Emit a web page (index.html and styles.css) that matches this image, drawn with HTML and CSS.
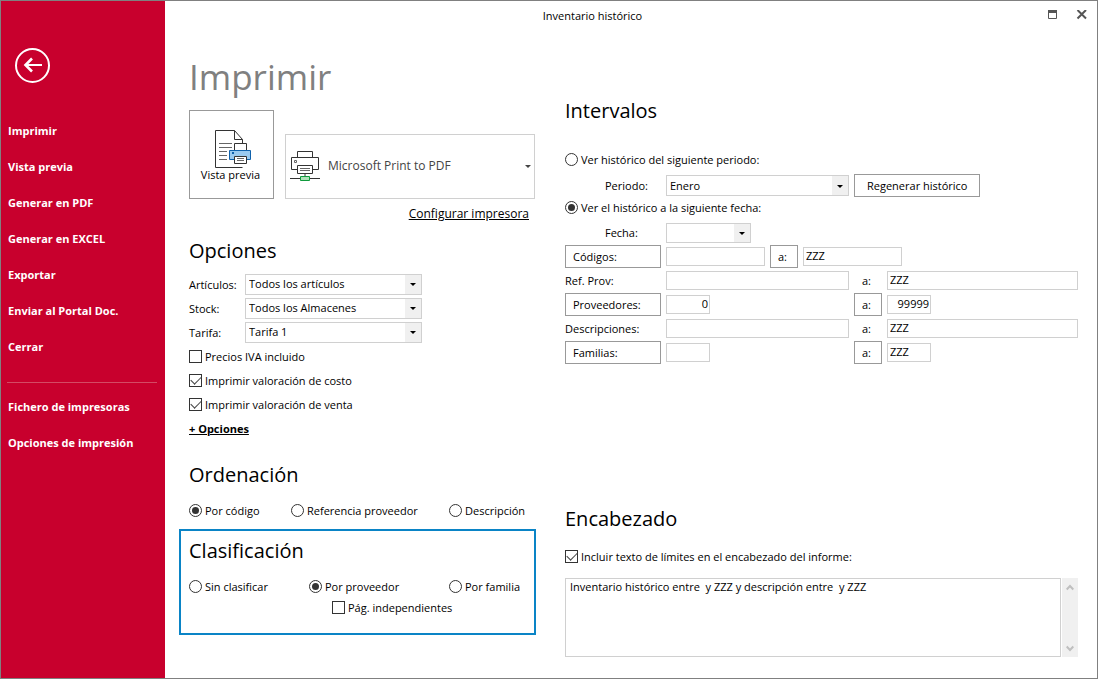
FILE: index.html
```html
<!DOCTYPE html>
<html lang="es">
<head>
<meta charset="utf-8">
<title>Inventario histórico</title>
<link rel="stylesheet" href="styles.css">
</head>
<body>
<div class="window">
  <aside class="sidebar">
    <button class="back" type="button" aria-label="Volver">
      <svg width="36" height="36" viewBox="0 0 36 36" fill="none" stroke="#fff">
        <circle cx="17.5" cy="17.5" r="16.5" stroke-width="2"/>
        <path d="M10 17H27" stroke-width="2"/>
        <path d="M17 10.5L10.500 17L17 23.500" stroke-width="2.6"/>
      </svg>
    </button>
    <nav class="menu">
      <a href="#">Imprimir</a>
      <a href="#">Vista previa</a>
      <a href="#">Generar en PDF</a>
      <a href="#">Generar en EXCEL</a>
      <a href="#">Exportar</a>
      <a href="#">Enviar al Portal Doc.</a>
      <a href="#">Cerrar</a>
      <hr>
      <a href="#">Fichero de impresoras</a>
      <a href="#">Opciones de impresión</a>
    </nav>
  </aside>
  <main class="main">
    <header class="titlebar">
      <span class="caption">Inventario histórico</span>
      <button type="button" aria-label="Maximizar">
        <svg width="12" height="12" viewBox="0 0 12 12"><path d="M1.5 .5h8v8h-8z" fill="none" stroke="#555"/><path d="M1 0h9v3H1z" fill="#555"/></svg>
      </button>
      <button type="button" aria-label="Cerrar ventana">
        <svg width="12" height="12" viewBox="0 0 12 12"><path d="M1.5 0l8.500 8.500M10 0l-8.500 8.500" stroke="#555" stroke-width="2"/></svg>
      </button>
    </header>
    <form class="columns">
      <div class="left">
        <h1>Imprimir</h1>
        <div class="printer">
          <button class="preview" type="button">
            <svg width="38" height="40" viewBox="0 0 38 40" fill="none">
              <path d="M28.500 37.500H1.500V.5H20.500L28.500 9.500V14" stroke="#333"/>
              <path d="M20.500.5V9.500H28.500" stroke="#333"/>
              <path d="M5 13.500H18M5 17.500H18M5 21.500H13M5 25.500H13M5 29.500H13" stroke="#666"/>
              <path d="M20.500 20V13.500H32.500V20" fill="#fff" stroke="#333"/>
              <path d="M15.500 20.500H36.500V29.500H15.500z" fill="#99caf0" stroke="#0f62ac"/>
              <path d="M18 22h2v2h-2z" fill="#0f62ac"/>
              <path d="M20.500 26.500H32.500V33.500H20.500z" fill="#fff" stroke="#333"/>
              <path d="M23 28.500H30M23 30.500H30" stroke="#666"/>
            </svg>
            <span>Vista previa</span>
          </button>
          <div class="combo device">
            <svg class="device-icon" width="30" height="32" viewBox="0 0 30 32" fill="none">
              <path d="M7.500 7V1.500H22.500V7" stroke="#333"/>
              <path d="M7 19.500H1.500V7.500H28.500V19.500H23" stroke="#333"/>
              <path d="M4.500 10.500h2v2h-2z" stroke="#666"/>
              <path d="M7.500 15.500H22.500V23.500H7.500z" fill="#fff" stroke="#333"/>
              <path d="M10 18.500H20M10 20.500H20" stroke="#666"/>
              <path d="M15 24v2" stroke="#999" stroke-width="2"/>
              <path d="M0 28.500H30" stroke="#333"/>
              <path d="M10.500 26.500h9v4h-9z" fill="#aee0b8" stroke="#0f9a3c"/>
            </svg>
            <select aria-label="Impresora"><option>Microsoft Print to PDF</option></select>
          </div>
        </div>
        <a class="configure" href="#">Configurar impresora</a>

        <section class="options">
          <h2>Opciones</h2>
          <div class="option"><label for="articulos">Artículos:</label><div class="combo"><select id="articulos"><option>Todos los artículos</option></select></div></div>
          <div class="option"><label for="stock">Stock:</label><div class="combo"><select id="stock"><option>Todos los Almacenes</option></select></div></div>
          <div class="option"><label for="tarifa">Tarifa:</label><div class="combo"><select id="tarifa"><option>Tarifa 1</option></select></div></div>
          <label class="choice"><input type="checkbox">Precios IVA incluido</label>
          <label class="choice"><input type="checkbox" checked>Imprimir valoración de costo</label>
          <label class="choice"><input type="checkbox" checked>Imprimir valoración de venta</label>
          <a class="more" href="#">+ Opciones</a>
        </section>

        <section class="sorting">
          <h2>Ordenación</h2>
          <div class="choices order">
            <label class="choice"><input type="radio" name="orden" checked>Por código</label>
            <label class="choice"><input type="radio" name="orden">Referencia proveedor</label>
            <label class="choice"><input type="radio" name="orden">Descripción</label>
          </div>
        </section>

        <section class="grouping">
          <h2>Clasificación</h2>
          <div class="choices group">
            <label class="choice"><input type="radio" name="clase">Sin clasificar</label>
            <label class="choice"><input type="radio" name="clase" checked>Por proveedor</label>
            <label class="choice"><input type="radio" name="clase">Por familia</label>
            <label class="choice nested"><input type="checkbox">Pág. independientes</label>
          </div>
        </section>
      </div>

      <div class="right">
        <section class="ranges">
          <h2>Intervalos</h2>
          <label class="choice"><input type="radio" name="modo">Ver histórico del siguiente periodo:</label>
          <div class="range">
            <label class="name inner" for="periodo">Periodo:</label>
            <div class="combo span"><select id="periodo"><option>Enero</option></select></div>
            <button class="push" type="button">Regenerar histórico</button>
          </div>
          <label class="choice"><input type="radio" name="modo" checked>Ver el histórico a la siguiente fecha:</label>
          <div class="range">
            <label class="name inner" for="fecha">Fecha:</label>
            <div class="combo date"><select id="fecha"><option></option></select></div>
          </div>
          <div class="range">
            <button class="push name" type="button">Códigos:</button>
            <input class="medium" type="text" aria-label="Código desde">
            <button class="push to" type="button">a:</button>
            <input class="medium" type="text" aria-label="Código hasta" value="ZZZ">
          </div>
          <div class="range">
            <label class="name" for="ref">Ref. Prov:</label>
            <input class="span" id="ref" type="text">
            <label class="to" for="ref-to">a:</label>
            <input class="fill" id="ref-to" type="text" value="ZZZ">
          </div>
          <div class="range">
            <button class="push name" type="button">Proveedores:</button>
            <div class="span"><input class="short number" type="text" aria-label="Proveedor desde" value="0"></div>
            <button class="push to" type="button">a:</button>
            <input class="short number" type="text" aria-label="Proveedor hasta" value="99999">
          </div>
          <div class="range">
            <label class="name" for="desc">Descripciones:</label>
            <input class="span" id="desc" type="text">
            <label class="to" for="desc-to">a:</label>
            <input class="fill" id="desc-to" type="text" value="ZZZ">
          </div>
          <div class="range">
            <button class="push name" type="button">Familias:</button>
            <div class="span"><input class="short" type="text" aria-label="Familia desde"></div>
            <button class="push to" type="button">a:</button>
            <input class="short" type="text" aria-label="Familia hasta" value="ZZZ">
          </div>
        </section>

        <section class="heading">
          <h2>Encabezado</h2>
          <label class="choice"><input type="checkbox" checked>Incluir texto de límites en el encabezado del informe:</label>
          <div class="note">
            <textarea aria-label="Texto del encabezado">Inventario histórico entre  y ZZZ y descripción entre  y ZZZ</textarea>
            <div class="scroll">
              <button type="button" aria-label="Subir"><svg width="8" height="7" viewBox="0 0 8 7"><path d="M.7 5.500L4 2L7.300 5.500" fill="none" stroke="#bfbfbf" stroke-width="2"/></svg></button>
              <button type="button" aria-label="Bajar"><svg width="8" height="7" viewBox="0 0 8 7"><path d="M.7 1.500L4 5L7.300 1.500" fill="none" stroke="#bfbfbf" stroke-width="2"/></svg></button>
            </div>
          </div>
        </section>
      </div>
    </form>
  </main>
</div>
</body>
</html>
```
FILE: styles.css
```css
* { box-sizing: border-box; }

body {
  margin: 0;
  background: #fff;
  color: #000;
  font: 11px/16px "Open Sans", "Noto Sans", sans-serif;
}

button, input, select, textarea {
  margin: 0;
  color: inherit;
  font: inherit;
}

button { padding: 0; border: 0; background: none; }

a { color: inherit; }

h1, h2 { margin: 0; font-weight: 400; }

h1 {
  color: #808080;
  font-size: 35px;
  line-height: 48px;
}

h2 { font-size: 20px; line-height: 28px; }

.window {
  display: flex;
  min-height: 100vh;
  border: 1px solid #808080;
}

/* Sidebar */
.sidebar {
  flex: 0 0 164px;
  padding: 47px 8px 0 6px;
  background: #c8002d;
  color: #fff;
}

.back { display: block; margin-left: 8px; height: 36px; }
.back svg { display: block; }

.menu { display: flex; flex-direction: column; margin-top: 29px; }

.menu a {
  padding-left: 1px;
  line-height: 36px;
  font-weight: 700;
  text-decoration: none;
  white-space: nowrap;
}

.menu hr {
  width: 100%;
  height: 1px;
  margin: 17px 0 6px;
  border: 0;
  background: #d44a64;
}

/* Main area */
.main { flex: 1; min-width: 0; }

.titlebar {
  display: flex;
  align-items: center;
  gap: 17px;
  height: 30px;
  padding-right: 9px;
}

.titlebar .caption { flex: 1; padding-right: 10px; text-align: center; }
.titlebar button { height: 20px; }
.titlebar svg { display: block; }

.columns {
  display: grid;
  grid-template-columns: minmax(0, 346fr) minmax(0, 513fr);
  gap: 30px;
  padding: 22px 19px 20px 24px;
}

/* Printer picker */
.printer {
  display: flex;
  align-items: flex-end;
  gap: 11px;
  margin-top: 9px;
}

.preview {
  display: flex;
  flex-direction: column;
  align-items: center;
  flex: 0 0 85px;
  height: 89px;
  padding: 19px 2px 0 0;
  border: 1px solid #999;
}

.preview svg { margin-left: 5px; }
.preview span { margin-top: -3px; }

.configure {
  display: block;
  width: fit-content;
  margin: 7px 6px 0 auto;
  font-size: 12px;
}

/* Combo boxes */
.combo { position: relative; height: 21px; }

.combo select {
  display: block;
  width: 100%;
  height: 100%;
  padding: 0 20px 0 3px;
  border: 1px solid #d0d0d0;
  border-radius: 0;
  background: linear-gradient(#f0f0f0, #f0f0f0) right / 16px 100% no-repeat #fff;
  appearance: none;
}

.combo::after {
  content: "";
  position: absolute;
  top: 50%;
  right: 6px;
  margin-top: -1px;
  border: 3px solid transparent;
  border-top-color: #000;
  border-bottom: 0;
  pointer-events: none;
}

.combo.device { flex: 1; height: 65px; }

.device select {
  padding: 0 20px 2px 42px;
  background: none;
  color: #444;
  font-size: 12px;
}

.device::after { right: 4px; margin-top: -2px; border-top-color: #444; }

.device-icon { position: absolute; top: 16px; left: 5px; }

/* Options */
.options { margin-top: 15px; }
.options h2 { margin-bottom: 8px; }

.option { display: flex; align-items: center; height: 24px; }
.option label { width: 56px; }
.option .combo { width: 177px; margin-bottom: 2px; }

.choice {
  display: flex;
  align-items: center;
  gap: 3px;
  height: 24px;
  white-space: nowrap;
}

.choice input {
  display: grid;
  place-items: center;
  flex: none;
  width: 13px;
  height: 13px;
  margin-bottom: 2px;
  border: 1px solid #333;
  background: #fff;
  appearance: none;
}

.choice input[type="radio"] { border-radius: 50%; }

.choice input[type="radio"]:checked::before {
  content: "";
  width: 7px;
  height: 7px;
  border-radius: 50%;
  background: #333;
}

.choice input[type="checkbox"]:checked::before {
  content: "";
  width: 9px;
  height: 5px;
  border: solid #444;
  border-width: 0 0 1px 1px;
  transform: translateY(-1px) rotate(-45deg);
}

.more { display: block; width: fit-content; line-height: 24px; font-weight: 700; }

.sorting { margin-top: 20px; }
.sorting h2, .grouping h2 { margin-bottom: 10px; }

.choices { display: grid; }
.order { grid-template-columns: minmax(0, 102fr) minmax(0, 158fr) minmax(0, 86fr); }
.group { grid-template-columns: minmax(0, 120fr) minmax(0, 140fr) minmax(0, 85fr); }

.nested { grid-column: 2; height: 18px; margin-left: 23px; }

.grouping {
  margin: 6px -1px 0 -10px;
  padding: 6px 0 16px 8px;
  border: 2px solid #0a84c6;
}

/* Ranges */
.ranges { margin-top: 44px; }
.ranges h2 { margin-bottom: 24px; }
.ranges .choice { height: 22px; }
.ranges .choice:first-of-type { margin-bottom: 3px; }

.range {
  display: flex;
  align-items: center;
  gap: 5px;
  height: 23px;
}

.range + .range { margin-top: 1px; }
.choice + .range { margin-top: 2px; }

.range input {
  height: 19px;
  padding: 0 2px 2px;
  border: 1px solid #d0d0d0;
  border-radius: 0;
}

.name { flex: 0 0 96px; text-align: left; }
.name.inner { padding-left: 40px; }
.span { flex: 0 0 183px; }
.combo.date { flex: 0 0 85px; height: 20px; }
.range .medium { width: 99px; }
.range .short { display: block; width: 44px; }
.range .fill { flex: 1; min-width: 0; }
.range .number { padding: 0 1px 2px; text-align: right; }
.to { flex: 0 0 28px; padding-left: 8px; text-align: left; }

.push {
  height: 23px;
  padding: 0 12px;
  border: 1px solid #999;
  white-space: nowrap;
}

.push.name { padding: 0 7px; }
.push.to { padding: 0 0 0 7px; }

/* Report heading */
.heading { margin-top: 141px; }
.heading h2 { margin-bottom: 12px; }

.note { display: flex; gap: 1px; margin-top: 9px; }

.note textarea {
  flex: 1;
  min-width: 0;
  height: 79px;
  padding: 0 4px;
  border: 1px solid #d0d0d0;
  resize: none;
  overflow: hidden;
}

.scroll {
  display: flex;
  flex-direction: column;
  justify-content: space-between;
  width: 16px;
  padding: 5px 0;
  background: #f0f0f0;
}

.scroll button { height: 8px; }
.scroll svg { display: block; margin: 0 auto; }
```
